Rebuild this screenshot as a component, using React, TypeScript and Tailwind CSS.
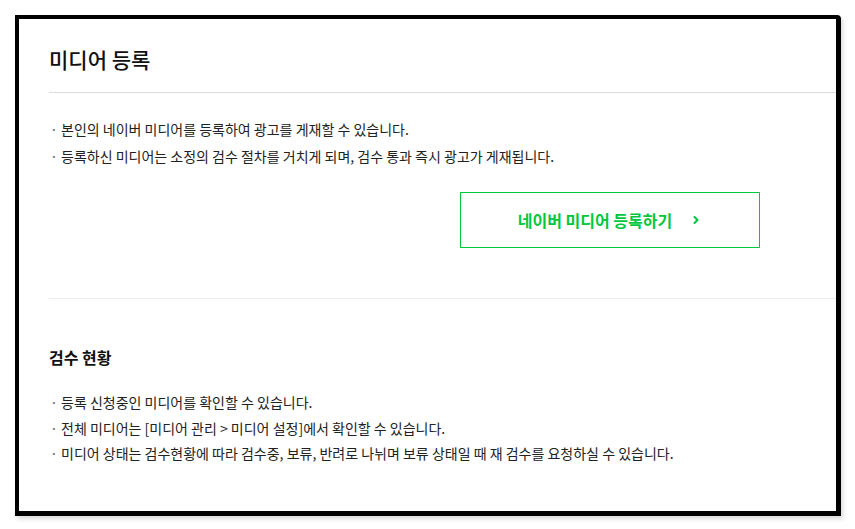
import { ChevronRight } from 'lucide-react';

const registerNotes = [
  '본인의 네이버 미디어를 등록하여 광고를 게재할 수 있습니다.',
  '등록하신 미디어는 소정의 검수 절차를 거치게 되며, 검수 통과 즉시 광고가 게재됩니다.',
];

const reviewNotes = [
  '등록 신청중인 미디어를 확인할 수 있습니다.',
  '전체 미디어는 [미디어 관리 > 미디어 설정]에서 확인할 수 있습니다.',
  '미디어 상태는 검수현황에 따라 검수중, 보류, 반려로 나뉘며 보류 상태일 때 재 검수를 요청하실 수 있습니다.',
];

function NoteList({ items, gap }: { items: string[]; gap: string }) {
  return (
    <ul className={`flex flex-col ${gap}`}>
      {items.map((t) => (
        <li key={t} className="flex items-center text-[14px] leading-[18px] text-[#222]">
          <span className="w-[12px] shrink-0 pl-[1px] text-[#666]">·</span>
          <span>{t}</span>
        </li>
      ))}
    </ul>
  );
}

export default function App() {
  return (
    <div
      className="w-[855px] h-[529px] bg-white pt-[15px] pl-[15px]"
      style={{ fontFamily: '"Noto Sans CJK KR", "Noto Sans", sans-serif' }}
    >
      <div className="w-[826px] h-[501px] border-[4px] border-r-[5px] border-b-[5px] border-black rounded-tr-[4px] bg-white shadow-[2px_3px_4px_rgba(0,0,0,0.15)] overflow-hidden">
        {/* 미디어 등록 */}
        <div className="ml-[30px] border-b border-[#dcdcdc] pt-[25px] pb-[18px]">
          <h1 className="text-[21px] leading-[30px] font-medium text-[#111]">미디어 등록</h1>
        </div>

        <div className="ml-[30px] border-b border-[#ececec] pt-[27px] pb-[50px]">
          <NoteList items={registerNotes} gap="gap-[9px]" />
          <div className="mt-[27px] ml-[411px] w-[300px] h-[56px] border border-[#00c73c] flex items-center justify-center gap-[18px]">
            <span className="text-[16px] font-bold text-[#00c73c]">네이버 미디어 등록하기</span>
            <ChevronRight className="w-[12px] h-[12px] text-[#00c73c]" strokeWidth={4} />
          </div>
        </div>

        {/* 검수 현황 */}
        <div className="ml-[30px] pt-[47px]">
          <h2 className="text-[16px] leading-[22px] font-bold text-[#111]">검수 현황</h2>
          <div className="mt-[25px]">
            <NoteList items={reviewNotes} gap="gap-[7.5px]" />
          </div>
        </div>
      </div>
    </div>
  );
}
